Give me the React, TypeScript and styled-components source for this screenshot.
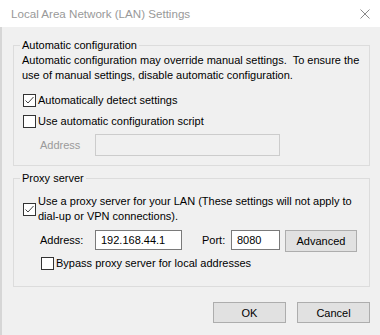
import styled, { createGlobalStyle } from 'styled-components';

const GlobalStyle = createGlobalStyle`
  html, body {
    margin: 0;
    padding: 0;
    background: #f0f0f0;
  }
`;

const Window = styled.div`
  width: 380px;
  height: 335px;
  display: flex;
  flex-direction: column;
  background: #f0f0f0;
  font-family: 'Liberation Sans', Arial, sans-serif;
  font-size: 11px;
  color: #000000;
  overflow: hidden;
`;

const TitleBar = styled.div`
  flex: none;
  height: 27px;
  display: flex;
  align-items: center;
  justify-content: space-between;
  padding: 0 10px 0 11px;
  background: #ffffff;
`;

const Title = styled.span`
  font-size: 11.6px;
  color: #999999;
`;

const Body = styled.div`
  flex: 1;
  display: flex;
  flex-direction: column;
  padding: 11px 10px 0 13px;
  box-shadow: inset 2px 0 0 #d6d6d6;
`;

const Group = styled.fieldset<{ $top?: number; $bottom: number }>`
  margin: ${(p) => p.$top ?? 0}px 0 0;
  padding: 0 8px ${(p) => p.$bottom}px;
  border: 1px solid #dcdcdc;
  min-width: 0;
`;

const Legend = styled.legend`
  margin-left: -2px;
  padding: 0 2px;
  line-height: 15px;
`;

const Note = styled.p`
  margin: 0;
  line-height: 15px;
`;

const CheckRow = styled.label<{ $top: number; $indent?: number }>`
  display: flex;
  align-items: center;
  gap: 2px;
  margin: ${(p) => p.$top}px 0 0 ${(p) => p.$indent ?? 1}px;
  line-height: 15px;
`;

const Box = styled.span`
  flex: none;
  width: 13px;
  height: 13px;
  box-sizing: border-box;
  border: 1px solid #333333;
  background: #ffffff;
  display: flex;
  align-items: center;
  justify-content: center;
`;

const FieldRow = styled.div<{ $top: number }>`
  display: flex;
  align-items: flex-start;
  margin: ${(p) => p.$top}px 0 0 18px;
`;

const FieldLabel = styled.span<{ $width: number; $gap?: number; $height: number; $disabled?: boolean }>`
  flex: none;
  width: ${(p) => p.$width}px;
  margin-left: ${(p) => p.$gap ?? 0}px;
  line-height: ${(p) => p.$height}px;
  color: ${(p) => (p.$disabled ? '#9a9a9a' : '#000000')};
`;

const TextBox = styled.div<{ $width: number; $height: number; $disabled?: boolean }>`
  flex: none;
  width: ${(p) => p.$width}px;
  height: ${(p) => p.$height}px;
  box-sizing: border-box;
  padding-left: 5px;
  border: 1px solid ${(p) => (p.$disabled ? '#cccccc' : '#7a7a7a')};
  background: ${(p) => (p.$disabled ? '#f0f0f0' : '#ffffff')};
  line-height: ${(p) => p.$height - 2}px;
`;

const Button = styled.button<{ $width: number; $height: number; $gap?: number }>`
  flex: none;
  width: ${(p) => p.$width}px;
  height: ${(p) => p.$height}px;
  margin: 0 0 0 ${(p) => p.$gap ?? 0}px;
  padding: 0;
  box-sizing: border-box;
  border: 1px solid #adadad;
  background: #e1e1e1;
  font-family: inherit;
  font-size: 11px;
  color: #000000;
`;

const Footer = styled.div`
  display: flex;
  justify-content: flex-end;
  gap: 11px;
  margin-top: 15px;
`;

function Check({ checked }: { checked?: boolean }) {
  return (
    <Box>
      {checked && (
        <svg width="11" height="11" viewBox="0 0 11 11">
          <polyline points="1.5,5.5 4,8 9.5,2" fill="none" stroke="#444" strokeWidth="1" />
        </svg>
      )}
    </Box>
  );
}

function CloseIcon() {
  return (
    <svg width="10" height="10" viewBox="0 0 10 10">
      <path d="M0.5 0.5 L9.5 9.5 M9.5 0.5 L0.5 9.5" stroke="#8a8a8a" strokeWidth="1" />
    </svg>
  );
}

export default function App() {
  return (
    <Window>
      <GlobalStyle />
      <TitleBar>
        <Title>Local Area Network (LAN) Settings</Title>
        <CloseIcon />
      </TitleBar>

      <Body>
        <Group $bottom={9}>
          <Legend>Automatic configuration</Legend>
          <Note>
            Automatic configuration may override manual settings.{'\u00a0'} To ensure the
            <br />
            use of manual settings, disable automatic configuration.
          </Note>
          <CheckRow $top={10}>
            <Check checked />
            Automatically detect settings
          </CheckRow>
          <CheckRow $top={6}>
            <Check />
            Use automatic configuration script
          </CheckRow>
          <FieldRow $top={5}>
            <FieldLabel $width={55} $height={22} $disabled>
              Address
            </FieldLabel>
            <TextBox $width={185} $height={22} $disabled />
          </FieldRow>
        </Group>

        <Group $top={5} $bottom={15}>
          <Legend>Proxy server</Legend>
          <CheckRow $top={8}>
            <Check checked />
            <span>
              Use a proxy server for your LAN (These settings will not apply to
              <br />
              dial-up or VPN connections).
            </span>
          </CheckRow>
          <FieldRow $top={6}>
            <FieldLabel $width={55} $height={20}>
              Address:
            </FieldLabel>
            <TextBox $width={87} $height={20}>
              192.168.44.1
            </TextBox>
            <FieldLabel $width={29} $gap={20} $height={20}>
              Port:
            </FieldLabel>
            <TextBox $width={49} $height={20}>
              8080
            </TextBox>
            <Button $width={72} $height={22} $gap={5}>
              Advanced
            </Button>
          </FieldRow>
          <CheckRow $top={4} $indent={19}>
            <Check />
            Bypass proxy server for local addresses
          </CheckRow>
        </Group>

        <Footer>
          <Button $width={73} $height={21}>
            OK
          </Button>
          <Button $width={73} $height={21}>
            Cancel
          </Button>
        </Footer>
      </Body>
    </Window>
  );
}
